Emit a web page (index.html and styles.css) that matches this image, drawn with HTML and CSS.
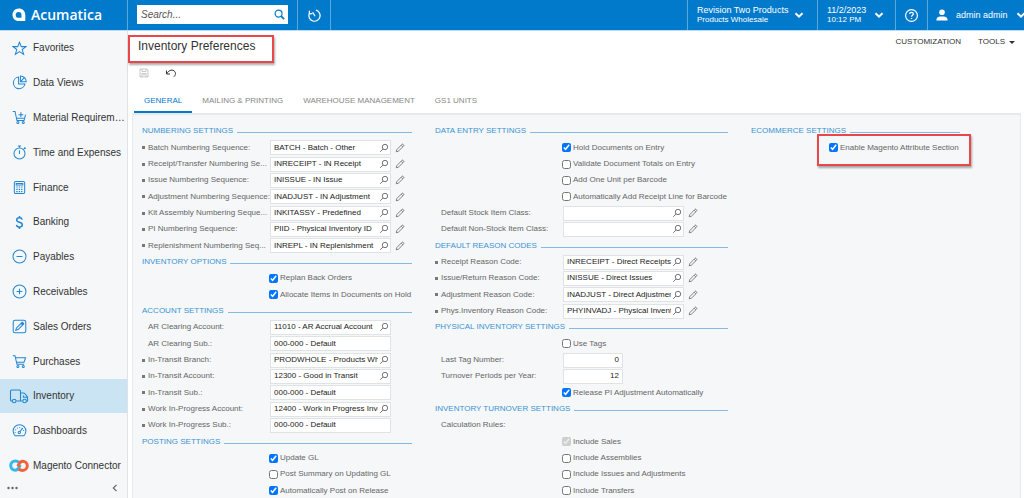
FILE: index.html
```html
<!DOCTYPE html>
<html lang="en">
<head>
<meta charset="utf-8">
<title>Inventory Preferences</title>
<link rel="stylesheet" href="styles.css">
</head>
<body>
<svg class="sprite" aria-hidden="true">
  <symbol id="lens" viewBox="0 0 10 10"><circle cx="6" cy="4" r="2.7"/><path d="M4 6 1.2 8.8"/></symbol>
  <symbol id="pencil" viewBox="0 0 10 10"><path d="M1.2 8.8 1.8 6.6 7 1.3Q7.5.9 8 1.3L8.7 2Q9.1 2.5 8.7 3L3.4 8.2ZM6.2 2.2 7.8 3.8"/></symbol>
  <symbol id="chevron" viewBox="0 0 10 10"><path d="M1.5 3.2 5 6.7 8.5 3.2"/></symbol>
</svg>

<header class="topbar">
  <a class="brand" href="#">
    <svg class="brand-mark" viewBox="0 0 14 14"><path fill="#fff" fill-rule="evenodd" d="M6.8.4C10.4.4 13.3 3 13.3 6.7V13.1H6.8C3 13.1.5 10.4.5 6.8S3.2.4 6.8.4ZM6.6 4A2.9 2.9 0 1 0 6.6 9.8H9.5V6.9A2.9 2.9 0 0 0 6.6 4Z"/></svg>
    <span>Acumatica</span>
  </a>
  <form class="search" role="search">
    <input class="search-input" type="text" placeholder="Search..." aria-label="Search">
    <button class="search-button" type="button" aria-label="Search"><svg viewBox="0 0 12 12"><circle cx="5" cy="5" r="3.8"/><path class="handle" d="M7.8 7.8 11 11"/></svg></button>
  </form>
  <button class="top-cell recent" type="button" aria-label="Recent"><svg viewBox="0 0 16 16"><path d="M9.5 2.3A6 6 0 1 1 2.3 6.2M2.6 3 2.5 6.3 5.7 6.1M6 4.5 8.6 8.8"/></svg></button>
  <button class="top-cell tenant" type="button"><span class="two-line"><span class="big">Revision Two Products</span><span class="small">Products Wholesale</span></span><svg class="chev"><use href="#chevron"/></svg></button>
  <button class="top-cell date" type="button"><span class="two-line"><span class="big">11/2/2023</span><span class="small">10:12 PM</span></span><svg class="chev"><use href="#chevron"/></svg></button>
  <button class="top-cell help" type="button" aria-label="Help"><svg viewBox="0 0 16 16"><circle cx="8" cy="8" r="6.3"/><path d="M6 6.5Q6 4.7 8 4.7T10 6.4C10 7.8 8 7.7 8 9.3M8 10.6V11.8"/></svg></button>
  <button class="top-cell user" type="button"><svg class="person" viewBox="0 0 12 12"><circle cx="6" cy="3.3" r="2.8"/><path d="M.4 11.4C.4 8 3 7.6 6 7.6S11.6 8 11.6 11.4Z"/></svg><span class="big">admin admin</span><svg class="chev"><use href="#chevron"/></svg></button>
</header>

<div class="shell">
  <nav class="sidebar">
    <ul class="menu">
      <li><a href="#"><svg viewBox="0 0 16 16"><path d="M8 1.3 9.9 6H14.9L10.9 9.1 12.4 14.2 8 11.2 3.6 14.2 5.1 9.1 1.1 6H6.1Z"/></svg><span>Favorites</span></a></li>
      <li><a href="#"><svg viewBox="0 0 16 16"><path d="M7 2.2A6.2 6.2 0 1 0 13.8 9.5H7ZM9 1V7.3H15.2A6.2 6.2 0 0 0 9 1ZM9 7.3 13 2.8"/></svg><span>Data Views</span></a></li>
      <li><a href="#"><svg viewBox="0 0 16 16"><path d="M.8 1.5H3.2L5.3 11.2H12.8L14.5 5M4.4 8.8H12.6M7 5H12M9.5 2.5V7.5"/><circle cx="6.3" cy="13.4" r="1.1"/><circle cx="12" cy="13.4" r="1.1"/></svg><span>Material Requirem…</span></a></li>
      <li><a href="#"><svg viewBox="0 0 16 16"><circle cx="8" cy="9" r="5.9"/><path d="M6.3 1H9.7M8 1V3M8 5.5V9.5M12.5 4.5 14 3.2M13.2 2.5 14.7 3.9"/></svg><span>Time and Expenses</span></a></li>
      <li><a href="#"><svg viewBox="0 0 16 16"><rect x="2.5" y="1.5" width="11" height="13" rx="1.5"/><path d="M4.5 3.8H11.5V5.3H4.5Z"/><path stroke-dasharray="1.5 1.1" d="M4.5 7.5H12M4.5 10H12M4.5 12.4H12"/></svg><span>Finance</span></a></li>
      <li><a href="#"><svg viewBox="0 0 16 16"><path class="heavy" d="M10.8 5C10.5 3.5 9.3 3 8 3 6.3 3 5 3.8 5 5.3 5 8.6 11 7 11 10.5 11 12 9.7 12.9 8 12.9 6.3 12.9 5 12.2 4.8 10.6M8 1V3M8 13V15"/></svg><span>Banking</span></a></li>
      <li><a href="#"><svg viewBox="0 0 16 16"><circle cx="8" cy="8" r="6.9"/><path d="M4.8 8H11.2"/></svg><span>Payables</span></a></li>
      <li><a href="#"><svg viewBox="0 0 16 16"><circle cx="8" cy="8" r="6.9"/><path d="M5 8H11M8 5V11"/></svg><span>Receivables</span></a></li>
      <li><a href="#"><svg viewBox="0 0 16 16"><rect x="1.3" y="1.3" width="13.4" height="13.4" rx="2"/><path d="M4 12 4.8 9.5 10.8 3.5 12.5 5.2 6.5 11.2ZM9.6 4.7 11.3 6.4"/><path d="M10.8 3.6 12.4 5.2" class="heavy"/></svg><span>Sales Orders</span></a></li>
      <li><a href="#"><svg viewBox="0 0 16 16"><path d="M.8 1.8H3.2L5.3 11H13M3.7 3.9H14.5L12.8 8.8H4.8"/><circle cx="6.3" cy="13.3" r="1.1"/><circle cx="12" cy="13.3" r="1.1"/></svg><span>Purchases</span></a></li>
      <li><a class="current" href="#" aria-current="page"><svg class="wide" viewBox="0 0 20 16"><path d="M3.2 13H2.5Q1.5 13 1.5 12V3Q1.5 2 2.5 2H10.5Q11.5 2 11.5 3V13H7.2M11.5 5H14.5Q15.5 5 16.2 6L18.5 9V13H17.6M11.5 13H13.6M14.5 7.5V9.2H18.3"/><circle cx="5.2" cy="13" r="1.8"/><circle cx="15.6" cy="13" r="1.8"/></svg><span>Inventory</span></a></li>
      <li><a href="#"><svg viewBox="0 0 16 16"><path d="M3.5 13.7A6.8 6.8 0 1 1 12.5 13.7Z"/><circle cx="7.8" cy="10" r="1.2"/><path d="M8.6 9 11.5 5.5"/><path stroke-dasharray="1 1.6" d="M3.5 10.5A4.5 4.5 0 0 1 12.5 8.5"/></svg><span>Dashboards</span></a></li>
      <li><a href="#"><svg class="wide" viewBox="0 0 20 16"><path class="link-blue" d="M10.5 4.5Q8.6 3 6.3 3A4.6 4.6 0 0 0 6.3 12.2C9.3 12.2 9.8 9.4 11.4 7"/><path class="link-orange" d="M9.4 11Q11.3 12.4 13.7 12.4A4.6 4.6 0 0 0 13.7 3.2C10.7 3.200 10.200 6 8.600 8.400"/></svg><span>Magento Connector</span></a></li>
    </ul>
    <div class="sidebar-foot">
      <button type="button" aria-label="More"><svg class="dots" viewBox="0 0 11 4"><circle cx="1.5" cy="2" r="1.2"/><circle cx="5.5" cy="2" r="1.2"/><circle cx="9.5" cy="2" r="1.2"/></svg></button>
      <button type="button" aria-label="Collapse"><svg class="collapse" viewBox="0 0 8 8"><path d="M5.5.8 2.3 4 5.5 7.2"/></svg></button>
    </div>
  </nav>

  <main class="content">
    <div class="title-row">
      <h1 class="marked">Inventory Preferences</h1>
      <div class="links"><a href="#">CUSTOMIZATION</a><a href="#">TOOLS <span class="caret"></span></a></div>
    </div>
    <div class="toolbar">
      <button type="button" disabled aria-label="Save"><svg class="save" viewBox="0 0 10 10"><path d="M1 1H8L9 2V9H1ZM3 1V3.5H7V1M2.8 9V5.5H7.2V9M3.5 7H6.5"/></svg></button>
      <button type="button" aria-label="Undo"><svg class="undo" viewBox="0 0 12 10"><path d="M1.5 2.5V6H5M1.7 5.8C3.5 2.5 6.5 1.2 9 2.8 11 4.3 11 7 8.8 8.8"/></svg></button>
    </div>
    <div class="tabs" role="tablist">
      <button role="tab" type="button" aria-selected="true">GENERAL</button>
      <button role="tab" type="button">MAILING &amp; PRINTING</button>
      <button role="tab" type="button">WAREHOUSE MANAGEMENT</button>
      <button role="tab" type="button">GS1 UNITS</button>
    </div>

    <form class="panel">
      <div class="column">
        <h2>NUMBERING SETTINGS</h2>
        <div class="row required"><label for="n1">Batch Numbering Sequence:</label><span class="field"><input id="n1" type="text" value="BATCH - Batch - Other"><button type="button" aria-label="Look up"><svg><use href="#lens"/></svg></button></span><button class="edit" type="button" aria-label="Edit"><svg><use href="#pencil"/></svg></button></div>
        <div class="row required"><label for="n2">Receipt/Transfer Numbering Se...</label><span class="field"><input id="n2" type="text" value="INRECEIPT - IN Receipt"><button type="button" aria-label="Look up"><svg><use href="#lens"/></svg></button></span><button class="edit" type="button" aria-label="Edit"><svg><use href="#pencil"/></svg></button></div>
        <div class="row required"><label for="n3">Issue Numbering Sequence:</label><span class="field"><input id="n3" type="text" value="INISSUE - IN Issue"><button type="button" aria-label="Look up"><svg><use href="#lens"/></svg></button></span><button class="edit" type="button" aria-label="Edit"><svg><use href="#pencil"/></svg></button></div>
        <div class="row required"><label for="n4">Adjustment Numbering Sequence:</label><span class="field"><input id="n4" type="text" value="INADJUST - IN Adjustment"><button type="button" aria-label="Look up"><svg><use href="#lens"/></svg></button></span><button class="edit" type="button" aria-label="Edit"><svg><use href="#pencil"/></svg></button></div>
        <div class="row required"><label for="n5">Kit Assembly Numbering Seque...</label><span class="field"><input id="n5" type="text" value="INKITASSY - Predefined"><button type="button" aria-label="Look up"><svg><use href="#lens"/></svg></button></span><button class="edit" type="button" aria-label="Edit"><svg><use href="#pencil"/></svg></button></div>
        <div class="row required"><label for="n6">PI Numbering Sequence:</label><span class="field"><input id="n6" type="text" value="PIID - Physical Inventory ID"><button type="button" aria-label="Look up"><svg><use href="#lens"/></svg></button></span><button class="edit" type="button" aria-label="Edit"><svg><use href="#pencil"/></svg></button></div>
        <div class="row required"><label for="n7">Replenishment Numbering Seq...</label><span class="field"><input id="n7" type="text" value="INREPL - IN Replenishment"><button type="button" aria-label="Look up"><svg><use href="#lens"/></svg></button></span><button class="edit" type="button" aria-label="Edit"><svg><use href="#pencil"/></svg></button></div>
        <h2>INVENTORY OPTIONS</h2>
        <label class="check"><input type="checkbox" checked>Replan Back Orders</label>
        <label class="check"><input type="checkbox" checked>Allocate Items in Documents on Hold</label>
        <h2>ACCOUNT SETTINGS</h2>
        <div class="row"><label for="a1">AR Clearing Account:</label><span class="field"><input id="a1" type="text" value="11010 - AR Accrual Account"><button type="button" aria-label="Look up"><svg><use href="#lens"/></svg></button></span></div>
        <div class="row"><label for="a2">AR Clearing Sub.:</label><span class="field"><input id="a2" type="text" value="000-000 - Default"></span></div>
        <div class="row required"><label for="a3">In-Transit Branch:</label><span class="field"><input id="a3" type="text" value="PRODWHOLE - Products Wholesale"><button type="button" aria-label="Look up"><svg><use href="#lens"/></svg></button></span></div>
        <div class="row required"><label for="a4">In-Transit Account:</label><span class="field"><input id="a4" type="text" value="12300 - Good in Transit"><button type="button" aria-label="Look up"><svg><use href="#lens"/></svg></button></span></div>
        <div class="row required"><label for="a5">In-Transit Sub.:</label><span class="field"><input id="a5" type="text" value="000-000 - Default"></span></div>
        <div class="row required"><label for="a6">Work In-Progress Account:</label><span class="field"><input id="a6" type="text" value="12400 - Work in Progress Inventory"><button type="button" aria-label="Look up"><svg><use href="#lens"/></svg></button></span></div>
        <div class="row required"><label for="a7">Work In-Progress Sub.:</label><span class="field"><input id="a7" type="text" value="000-000 - Default"></span></div>
        <h2>POSTING SETTINGS</h2>
        <label class="check"><input type="checkbox" checked>Update GL</label>
        <label class="check"><input type="checkbox">Post Summary on Updating GL</label>
        <label class="check"><input type="checkbox" checked>Automatically Post on Release</label>
      </div>

      <div class="column">
        <h2>DATA ENTRY SETTINGS</h2>
        <label class="check"><input type="checkbox" checked>Hold Documents on Entry</label>
        <label class="check"><input type="checkbox">Validate Document Totals on Entry</label>
        <label class="check"><input type="checkbox">Add One Unit per Barcode</label>
        <label class="check"><input type="checkbox">Automatically Add Receipt Line for Barcode</label>
        <div class="row"><label for="d1">Default Stock Item Class:</label><span class="field"><input id="d1" type="text"><button type="button" aria-label="Look up"><svg><use href="#lens"/></svg></button></span><button class="edit" type="button" aria-label="Edit"><svg><use href="#pencil"/></svg></button></div>
        <div class="row"><label for="d2">Default Non-Stock Item Class:</label><span class="field"><input id="d2" type="text"><button type="button" aria-label="Look up"><svg><use href="#lens"/></svg></button></span><button class="edit" type="button" aria-label="Edit"><svg><use href="#pencil"/></svg></button></div>
        <h2>DEFAULT REASON CODES</h2>
        <div class="row required"><label for="r1">Receipt Reason Code:</label><span class="field"><input id="r1" type="text" value="INRECEIPT - Direct Receipts"><button type="button" aria-label="Look up"><svg><use href="#lens"/></svg></button></span><button class="edit" type="button" aria-label="Edit"><svg><use href="#pencil"/></svg></button></div>
        <div class="row required"><label for="r2">Issue/Return Reason Code:</label><span class="field"><input id="r2" type="text" value="INISSUE - Direct Issues"><button type="button" aria-label="Look up"><svg><use href="#lens"/></svg></button></span><button class="edit" type="button" aria-label="Edit"><svg><use href="#pencil"/></svg></button></div>
        <div class="row required"><label for="r3">Adjustment Reason Code:</label><span class="field"><input id="r3" type="text" value="INADJUST - Direct Adjustment"><button type="button" aria-label="Look up"><svg><use href="#lens"/></svg></button></span><button class="edit" type="button" aria-label="Edit"><svg><use href="#pencil"/></svg></button></div>
        <div class="row required"><label for="r4">Phys.Inventory Reason Code:</label><span class="field"><input id="r4" type="text" value="PHYINVADJ - Physical Inventory"><button type="button" aria-label="Look up"><svg><use href="#lens"/></svg></button></span><button class="edit" type="button" aria-label="Edit"><svg><use href="#pencil"/></svg></button></div>
        <h2>PHYSICAL INVENTORY SETTINGS</h2>
        <label class="check"><input type="checkbox">Use Tags</label>
        <div class="row"><label for="p1">Last Tag Number:</label><span class="field number"><input id="p1" type="text" value="0"></span></div>
        <div class="row"><label for="p2">Turnover Periods per Year:</label><span class="field number"><input id="p2" type="text" value="12"></span></div>
        <label class="check"><input type="checkbox" checked>Release PI Adjustment Automatically</label>
        <h2>INVENTORY TURNOVER SETTINGS</h2>
        <div class="row"><span>Calculation Rules:</span></div>
        <label class="check"><input type="checkbox" checked disabled>Include Sales</label>
        <label class="check"><input type="checkbox">Include Assemblies</label>
        <label class="check"><input type="checkbox">Include Issues and Adjustments</label>
        <label class="check"><input type="checkbox">Include Transfers</label>
      </div>

      <div class="column narrow">
        <h2>ECOMMERCE SETTINGS</h2>
        <label class="check marked"><input type="checkbox" checked>Enable Magento Attribute Section</label>
      </div>
    </form>
  </main>
</div>
</body>
</html>
```
FILE: styles.css
```css
* { box-sizing: border-box; }

body {
  margin: 0;
  height: 100vh;
  overflow: hidden;
  display: flex;
  flex-direction: column;
  background: #fff;
  color: #333;
  font: 8px/14px "Liberation Sans", Arial, sans-serif;
}

button, input { font: inherit; color: inherit; }
button { display: flex; align-items: center; padding: 0; border: 0; background: none; }
a { color: inherit; text-decoration: none; }
svg { display: block; flex: none; fill: none; stroke: currentColor; }
.sprite { position: absolute; width: 0; height: 0; }

/* Top bar */
.topbar {
  display: flex;
  flex: none;
  height: 31px;
  border-bottom: 1px solid #bcdcf3;
  background: #027acc;
  color: #fff;
}
.brand {
  display: flex;
  align-items: center;
  gap: 5px;
  width: 128px;
  padding-left: 12px;
  border-right: 1px solid #5aa8de;
  font: 600 14px/20px "Open Sans", sans-serif;
}
.brand-mark { width: 14px; height: 14px; stroke: none; }
.search {
  display: flex;
  align-items: center;
  width: 151px;
  height: 19px;
  margin: 5px 9px;
  background: #fff;
}
.search-input {
  flex: 1;
  min-width: 0;
  padding: 0 0 0 4px;
  border: 0;
  outline: 0;
  background: none;
  color: #333;
  font-size: 10px;
}
.search-input::placeholder { color: #555; font-style: italic; opacity: 1; }
.search-button { width: 14px; color: #027acc; }
.search-button svg { width: 11px; height: 11px; stroke-width: 1.3; }
.search-button .handle { stroke-width: 2; }
.top-cell { border-left: 1px solid #5aa8de; }
.recent { width: 34px; justify-content: center; border-right: 1px solid #5aa8de; margin-right: auto; }
.recent svg, .help svg { width: 15px; height: 15px; stroke-width: 1.3; }
.two-line { display: flex; flex-direction: column; text-align: left; flex: 1; }
.big { font-size: 9px; line-height: 10px; white-space: nowrap; }
.small { font-size: 8px; line-height: 10px; white-space: nowrap; }
.chev { width: 10px; height: 10px; stroke-width: 2; }
.tenant { width: 130px; padding: 0 13px 0 9px; }
.date { width: 78px; padding: 0 11px 0 9px; }
.help { width: 32px; justify-content: center; }
.user { width: 97px; padding-left: 8px; gap: 8px; }
.person { width: 12px; height: 12px; fill: #fff; stroke: none; }

/* Sidebar */
.shell { display: flex; flex: 1; min-height: 0; }
.sidebar {
  display: flex;
  flex-direction: column;
  flex: none;
  width: 128px;
  border-right: 1px solid #dfe3e7;
  background: #f5f7f9;
}
.menu {
  display: grid;
  grid-auto-rows: 34px 35px 35px 35px 35px;
  margin: 0;
  padding: 0;
  list-style: none;
  font-size: 10px;
}
.menu li { display: grid; min-width: 0; }
.menu a {
  display: grid;
  grid-template-columns: 20px minmax(0, 1fr);
  justify-items: center;
  align-items: center;
  gap: 4px;
  padding: 0 2px 0 9px;
}
.menu span { justify-self: stretch; white-space: nowrap; }
.menu svg { width: 15px; height: 15px; color: #2387d3; stroke-width: 1.1; }
.menu .wide { width: 20px; height: 16px; }
.menu .heavy { stroke-width: 1.6; }
.menu .current { background: #cbe4f4; }
.link-blue { stroke: #35b8ef; stroke-width: 3; }
.link-orange { stroke: #f1643a; stroke-width: 3; }
.sidebar-foot { display: flex; justify-content: space-between; padding: 0 8px 0 7px; color: #666; height: 10px; }
.dots { width: 11px; height: 4px; fill: currentColor; stroke: none; }
.collapse { width: 8px; height: 8px; stroke-width: 1.2; }

/* Page heading */
.content { display: flex; flex-direction: column; flex: 1; min-width: 0; padding: 0 3px 0 4px; }
.title-row { display: flex; justify-content: space-between; align-items: center; height: 30px; padding: 0 6px; }
h1 { margin: 0; font-size: 12px; font-weight: 400; line-height: 14px; }
.links { display: flex; gap: 17px; line-height: 22px; align-self: flex-start; }
.links a { display: flex; align-items: center; gap: 4px; }
.caret { border: 3px solid transparent; border-top-color: #333; border-bottom: 0; }
.toolbar { display: flex; gap: 16px; height: 23px; padding: 0 7px; align-items: center; }
.save { width: 10px; height: 10px; color: #bbb; stroke-width: 0.8; }
.undo { width: 12px; height: 10px; stroke-width: 1; }
.tabs { display: flex; padding: 7px 0 0 2px; height: 29px; }
.tabs button { padding: 0 10px; border-bottom: 2px solid transparent; color: #888; white-space: nowrap; }
.tabs [aria-selected] { border-color: #027acc; color: #027acc; }

/* Settings form */
.panel {
  display: grid;
  grid-template-columns: 270px 293px 209px;
  gap: 23px;
  flex: 1;
  min-height: 0;
  padding: 8px 9px 0;
  border: 2px solid #e6eaed;
  border-width: 2px 1px 0;
  background: #f5f7f9;
  color: #666;
}
.column { display: grid; grid-template-columns: minmax(0, 1fr); grid-auto-rows: 16px 17px 16px; align-content: start; }
h2 {
  display: flex;
  align-items: center;
  gap: 4px;
  margin: 0;
  color: #3b93d3;
  font-size: 8px;
  font-weight: 400;
  white-space: nowrap;
}
h2::after { content: ""; flex: 1; height: 1px; margin-top: 3px; background: #82bce5; }
.row { display: flex; align-items: center; padding-left: 6px; }
.required { padding-left: 0; }
.required::before { content: ""; width: 3px; height: 3px; margin-right: 3px; background: #777; }
.row label { width: 122px; white-space: nowrap; }
.field { display: flex; width: 121px; height: 15px; border: 1px solid #dfe3e6; background: #fff; color: #222; }
.field input { flex: 1; min-width: 0; padding: 0 0 0 3px; border: 0; outline: 0; background: none; }
.field button { width: 12px; justify-content: center; color: #666; }
.field svg { width: 10px; height: 10px; stroke-width: 0.9; }
.number { width: 60px; }
.number input { padding-right: 3px; text-align: right; }
.edit { margin-left: 4px; color: #666; }
.edit svg { width: 10px; height: 10px; stroke-width: 0.8; }
.check { display: flex; align-items: center; gap: 2px; padding-left: 127px; white-space: nowrap; }
.check input { width: 9px; height: 9px; margin: 0; }
.narrow .check { padding-left: 78px; }

/* Red call-out frames */
.marked { position: relative; }
.marked::after {
  content: "";
  position: absolute;
  inset: -4px -19px -10px -10px;
  border: 2px solid #e9474c;
  box-shadow: 1px 2px 2px #0005;
  pointer-events: none;
}
.check.marked::after { inset: -5px -11px -10px 66px; }
```
